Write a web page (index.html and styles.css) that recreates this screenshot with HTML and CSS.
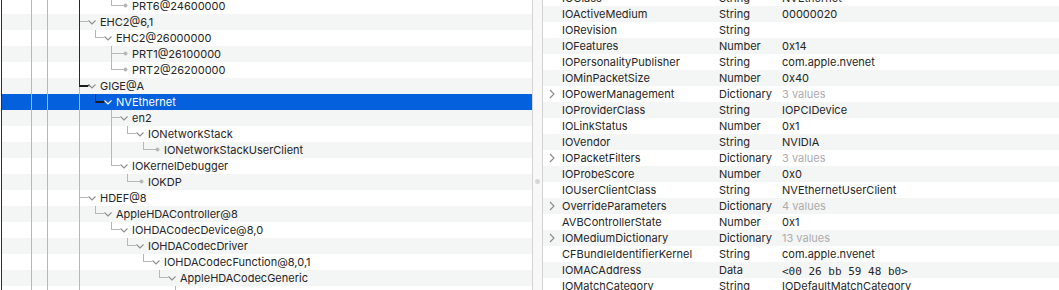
FILE: index.html
```html
<!DOCTYPE html>
<html>
<head>
<meta charset="utf-8">
<link rel="stylesheet" href="styles.css">
</head>
<body>
<div class="tree">
  <div class="rows">
    <div class="row"><i class="g"></i><i class="g p"></i><i class="g p"></i><i class="g"></i><i class="g p d"></i><i class="g"></i><i class="g e"></i><span class="ic"><svg width="12" height="16"><line x1="0" y1="7.5" x2="4" y2="7.5" stroke="#b7b7b7"/><circle cx="5.5" cy="7.5" r="2" fill="#b7b7b7"/></svg></span><span class="tx">PRT6@24600000</span></div>
    <div class="row alt"><i class="g"></i><i class="g p"></i><i class="g p"></i><i class="g"></i><i class="g t d"></i><span class="ic"><svg width="12" height="16"><polyline points="0.5,6.5 4,10 7.5,6.5" fill="none" stroke="#8e8e8e" stroke-width="1.1"/></svg></span><span class="tx">EHC2@6,1</span></div>
    <div class="row"><i class="g"></i><i class="g p"></i><i class="g p"></i><i class="g"></i><i class="g p d"></i><i class="g e"></i><span class="ic"><svg width="12" height="16"><polyline points="0.5,6.5 4,10 7.5,6.5" fill="none" stroke="#8e8e8e" stroke-width="1.1"/></svg></span><span class="tx">EHC2@26000000</span></div>
    <div class="row alt"><i class="g"></i><i class="g p"></i><i class="g p"></i><i class="g"></i><i class="g p d"></i><i class="g"></i><i class="g t"></i><span class="ic"><svg width="12" height="16"><line x1="0" y1="7.5" x2="4" y2="7.5" stroke="#b7b7b7"/><circle cx="5.5" cy="7.5" r="2" fill="#b7b7b7"/></svg></span><span class="tx">PRT1@26100000</span></div>
    <div class="row"><i class="g"></i><i class="g p"></i><i class="g p"></i><i class="g"></i><i class="g p d"></i><i class="g"></i><i class="g e"></i><span class="ic"><svg width="12" height="16"><line x1="0" y1="7.5" x2="4" y2="7.5" stroke="#b7b7b7"/><circle cx="5.5" cy="7.5" r="2" fill="#b7b7b7"/></svg></span><span class="tx">PRT2@26200000</span></div>
    <div class="row alt"><i class="g"></i><i class="g p"></i><i class="g p"></i><i class="g"></i><i class="g ts dh"></i><span class="ic"><svg width="12" height="16"><line x1="0" y1="7.5" x2="2" y2="7.5" stroke="#222" stroke-width="1.5"/><polyline points="0.5,6.5 4,10 7.5,6.5" fill="none" stroke="#8e8e8e" stroke-width="1.1"/></svg></span><span class="tx">GIGE@A</span></div>
    <div class="row sel"><i class="g"></i><i class="g p"></i><i class="g p"></i><i class="g"></i><i class="g p"></i><i class="g e d dh"></i><span class="ic"><svg width="12" height="16"><line x1="0" y1="7.5" x2="2" y2="7.5" stroke="#111" stroke-width="1.5"/><polyline points="0.5,6.5 4,10 7.5,6.5" fill="none" stroke="#ffffff" stroke-width="1.2"/></svg></span><span class="tx">NVEthernet</span></div>
    <div class="row alt"><i class="g"></i><i class="g p"></i><i class="g p"></i><i class="g"></i><i class="g p"></i><i class="g"></i><i class="g t"></i><span class="ic"><svg width="12" height="16"><polyline points="0.5,6.5 4,10 7.5,6.5" fill="none" stroke="#8e8e8e" stroke-width="1.1"/></svg></span><span class="tx">en2</span></div>
    <div class="row"><i class="g"></i><i class="g p"></i><i class="g p"></i><i class="g"></i><i class="g p"></i><i class="g"></i><i class="g p"></i><i class="g e"></i><span class="ic"><svg width="12" height="16"><polyline points="0.5,6.5 4,10 7.5,6.5" fill="none" stroke="#8e8e8e" stroke-width="1.1"/></svg></span><span class="tx">IONetworkStack</span></div>
    <div class="row alt"><i class="g"></i><i class="g p"></i><i class="g p"></i><i class="g"></i><i class="g p"></i><i class="g"></i><i class="g p"></i><i class="g"></i><i class="g e"></i><span class="ic"><svg width="12" height="16"><line x1="0" y1="7.5" x2="4" y2="7.5" stroke="#b7b7b7"/><circle cx="5.5" cy="7.5" r="2" fill="#b7b7b7"/></svg></span><span class="tx">IONetworkStackUserClient</span></div>
    <div class="row"><i class="g"></i><i class="g p"></i><i class="g p"></i><i class="g"></i><i class="g p"></i><i class="g"></i><i class="g e"></i><span class="ic"><svg width="12" height="16"><polyline points="0.5,6.5 4,10 7.5,6.5" fill="none" stroke="#8e8e8e" stroke-width="1.1"/></svg></span><span class="tx">IOKernelDebugger</span></div>
    <div class="row alt"><i class="g"></i><i class="g p"></i><i class="g p"></i><i class="g"></i><i class="g p"></i><i class="g"></i><i class="g"></i><i class="g e"></i><span class="ic"><svg width="12" height="16"><line x1="0" y1="7.5" x2="4" y2="7.5" stroke="#b7b7b7"/><circle cx="5.5" cy="7.5" r="2" fill="#b7b7b7"/></svg></span><span class="tx">IOKDP</span></div>
    <div class="row"><i class="g"></i><i class="g p"></i><i class="g p"></i><i class="g"></i><i class="g t"></i><span class="ic"><svg width="12" height="16"><polyline points="0.5,6.5 4,10 7.5,6.5" fill="none" stroke="#8e8e8e" stroke-width="1.1"/></svg></span><span class="tx">HDEF@8</span></div>
    <div class="row alt"><i class="g"></i><i class="g p"></i><i class="g p"></i><i class="g"></i><i class="g p"></i><i class="g e"></i><span class="ic"><svg width="12" height="16"><polyline points="0.5,6.5 4,10 7.5,6.5" fill="none" stroke="#8e8e8e" stroke-width="1.1"/></svg></span><span class="tx">AppleHDAController@8</span></div>
    <div class="row"><i class="g"></i><i class="g p"></i><i class="g p"></i><i class="g"></i><i class="g p"></i><i class="g"></i><i class="g e"></i><span class="ic"><svg width="12" height="16"><polyline points="0.5,6.5 4,10 7.5,6.5" fill="none" stroke="#8e8e8e" stroke-width="1.1"/></svg></span><span class="tx">IOHDACodecDevice@8,0</span></div>
    <div class="row alt"><i class="g"></i><i class="g p"></i><i class="g p"></i><i class="g"></i><i class="g p"></i><i class="g"></i><i class="g"></i><i class="g e"></i><span class="ic"><svg width="12" height="16"><polyline points="0.5,6.5 4,10 7.5,6.5" fill="none" stroke="#8e8e8e" stroke-width="1.1"/></svg></span><span class="tx">IOHDACodecDriver</span></div>
    <div class="row"><i class="g"></i><i class="g p"></i><i class="g p"></i><i class="g"></i><i class="g p"></i><i class="g"></i><i class="g"></i><i class="g"></i><i class="g e"></i><span class="ic"><svg width="12" height="16"><polyline points="0.5,6.5 4,10 7.5,6.5" fill="none" stroke="#8e8e8e" stroke-width="1.1"/></svg></span><span class="tx">IOHDACodecFunction@8,0,1</span></div>
    <div class="row alt"><i class="g"></i><i class="g p"></i><i class="g p"></i><i class="g"></i><i class="g p"></i><i class="g"></i><i class="g"></i><i class="g"></i><i class="g"></i><i class="g e"></i><span class="ic"><svg width="12" height="16"><polyline points="0.5,6.5 4,10 7.5,6.5" fill="none" stroke="#8e8e8e" stroke-width="1.1"/></svg></span><span class="tx">AppleHDACodecGeneric</span></div>
    <div class="row"><i class="g"></i><i class="g p"></i><i class="g p"></i><i class="g"></i><i class="g p"></i><i class="g"></i><i class="g"></i><i class="g"></i><i class="g"></i><i class="g"></i><i class="g p"></i><span class="tx"></span></div>
  </div>
</div>
<div class="split"><span class="knob"></span></div>
<div class="props">
  <div class="rows props-rows">
    <div class="prow"><span class="k">IOClass</span><span class="ty">String</span><span class="v">NVEthernet</span></div>
    <div class="prow alt"><span class="k">IOActiveMedium</span><span class="ty">String</span><span class="v">00000020</span></div>
    <div class="prow"><span class="k">IORevision</span><span class="ty">String</span><span class="v"></span></div>
    <div class="prow alt"><span class="k">IOFeatures</span><span class="ty">Number</span><span class="v">0x14</span></div>
    <div class="prow"><span class="k">IOPersonalityPublisher</span><span class="ty">String</span><span class="v">com.apple.nvenet</span></div>
    <div class="prow alt"><span class="k">IOMinPacketSize</span><span class="ty">Number</span><span class="v">0x40</span></div>
    <div class="prow"><span class="k"><svg class="disc" width="6" height="10"><polyline points="1,1 5,5 1,9" fill="none" stroke="#8a8a8a" stroke-width="1.1"/></svg>IOPowerManagement</span><span class="ty">Dictionary</span><span class="v muted">3 values</span></div>
    <div class="prow alt"><span class="k">IOProviderClass</span><span class="ty">String</span><span class="v">IOPCIDevice</span></div>
    <div class="prow"><span class="k">IOLinkStatus</span><span class="ty">Number</span><span class="v">0x1</span></div>
    <div class="prow alt"><span class="k">IOVendor</span><span class="ty">String</span><span class="v">NVIDIA</span></div>
    <div class="prow"><span class="k"><svg class="disc" width="6" height="10"><polyline points="1,1 5,5 1,9" fill="none" stroke="#8a8a8a" stroke-width="1.1"/></svg>IOPacketFilters</span><span class="ty">Dictionary</span><span class="v muted">3 values</span></div>
    <div class="prow alt"><span class="k">IOProbeScore</span><span class="ty">Number</span><span class="v">0x0</span></div>
    <div class="prow"><span class="k">IOUserClientClass</span><span class="ty">String</span><span class="v">NVEthernetUserClient</span></div>
    <div class="prow alt"><span class="k"><svg class="disc" width="6" height="10"><polyline points="1,1 5,5 1,9" fill="none" stroke="#8a8a8a" stroke-width="1.1"/></svg>OverrideParameters</span><span class="ty">Dictionary</span><span class="v muted">4 values</span></div>
    <div class="prow"><span class="k">AVBControllerState</span><span class="ty">Number</span><span class="v">0x1</span></div>
    <div class="prow alt"><span class="k"><svg class="disc" width="6" height="10"><polyline points="1,1 5,5 1,9" fill="none" stroke="#8a8a8a" stroke-width="1.1"/></svg>IOMediumDictionary</span><span class="ty">Dictionary</span><span class="v muted">13 values</span></div>
    <div class="prow"><span class="k">CFBundleIdentifierKernel</span><span class="ty">String</span><span class="v">com.apple.nvenet</span></div>
    <div class="prow alt"><span class="k">IOMACAddress</span><span class="ty">Data</span><span class="v mono">&lt;00 26 bb 59 48 b0&gt;</span></div>
    <div class="prow"><span class="k">IOMatchCategory</span><span class="ty">String</span><span class="v">IODefaultMatchCategory</span></div>
  </div>
</div>
</body>
</html>
```

FILE: styles.css
```css
html, body {
  margin: 0;
  padding: 0;
  background: #ffffff;
}
body {
  display: flex;
  height: 290px;
  overflow: hidden;
  font-family: Inter, "Noto Sans", "Liberation Sans", sans-serif;
  font-size: 11px;
  color: #262626;
}
.tree {
  margin-left: 1px;
  width: 530px;
  border-left: 1px solid #2e2e2e;
  border-right: 1px solid #d4d4d4;
  flex: none;
  overflow: hidden;
}
.rows {
  margin-top: -2px;
}
.row {
  display: flex;
  align-items: stretch;
  height: 16px;
  line-height: 16px;
  padding-left: 6px;
  white-space: nowrap;
  background: #ffffff;
}
.row.alt, .prow.alt {
  background: #f4f5f5;
}
.row.sel {
  background: #0560dd;
  color: #ffffff;
}
.g {
  --v: #b7b7b7;
  --h: #b7b7b7;
  display: block;
  width: 16px;
  height: 16px;
  flex: none;
}
.g.d { --v: #2a2a2a; }
.g.dh { --h: #1c1c1c; }
.p {
  background: linear-gradient(var(--v), var(--v)) 7px 0 / 1px 16px no-repeat;
}
.e {
  background:
    linear-gradient(var(--v), var(--v)) 7px 0 / 1px 8px no-repeat,
    linear-gradient(var(--h), var(--h)) 7px 7px / 9px 1px no-repeat;
}
.t {
  background:
    linear-gradient(var(--v), var(--v)) 7px 0 / 1px 16px no-repeat,
    linear-gradient(var(--h), var(--h)) 7px 7px / 9px 1px no-repeat;
}
.ts {
  background:
    linear-gradient(#2a2a2a, #2a2a2a) 7px 0 / 1px 8px no-repeat,
    linear-gradient(var(--h), var(--h)) 7px 7px / 9px 2px no-repeat,
    linear-gradient(#b7b7b7, #b7b7b7) 7px 9px / 1px 7px no-repeat;
}
.e.d.dh {
  background:
    linear-gradient(var(--v), var(--v)) 7px 0 / 1px 8px no-repeat,
    linear-gradient(var(--h), var(--h)) 7px 7px / 9px 2px no-repeat;
}
.ic {
  display: block;
  width: 12px;
  height: 16px;
  flex: none;
}
.ic svg {
  display: block;
}
.tx {
  display: block;
}
.split {
  width: 9px;
  flex: none;
  background: #f8f8f8;
  border-right: 1px solid #d2d2d2;
  display: flex;
  flex-direction: column;
  align-items: center;
  padding-top: 179px;
}
.knob {
  display: block;
  width: 5px;
  height: 5px;
  border-radius: 50%;
  background: #d6d6d6;
}
.props {
  flex: 1;
  overflow: hidden;
}
.props-rows {
  margin-top: -10px;
}
.prow {
  display: flex;
  height: 16px;
  line-height: 16px;
  white-space: nowrap;
  background: #ffffff;
}
.k {
  width: 157px;
  padding-left: 19px;
  flex: none;
  display: flex;
  align-items: center;
}
.disc {
  display: block;
  margin-left: -13px;
  margin-right: 7px;
  flex: none;
}
.ty {
  width: 63px;
  flex: none;
}
.v {
  flex: 1;
}
.v.muted {
  color: #acacac;
}
.v.mono {
  font-family: "DejaVu Sans Mono", "Liberation Mono", monospace;
  font-size: 11px;
  line-height: 18px;
  padding-top: 1px;
}
```
